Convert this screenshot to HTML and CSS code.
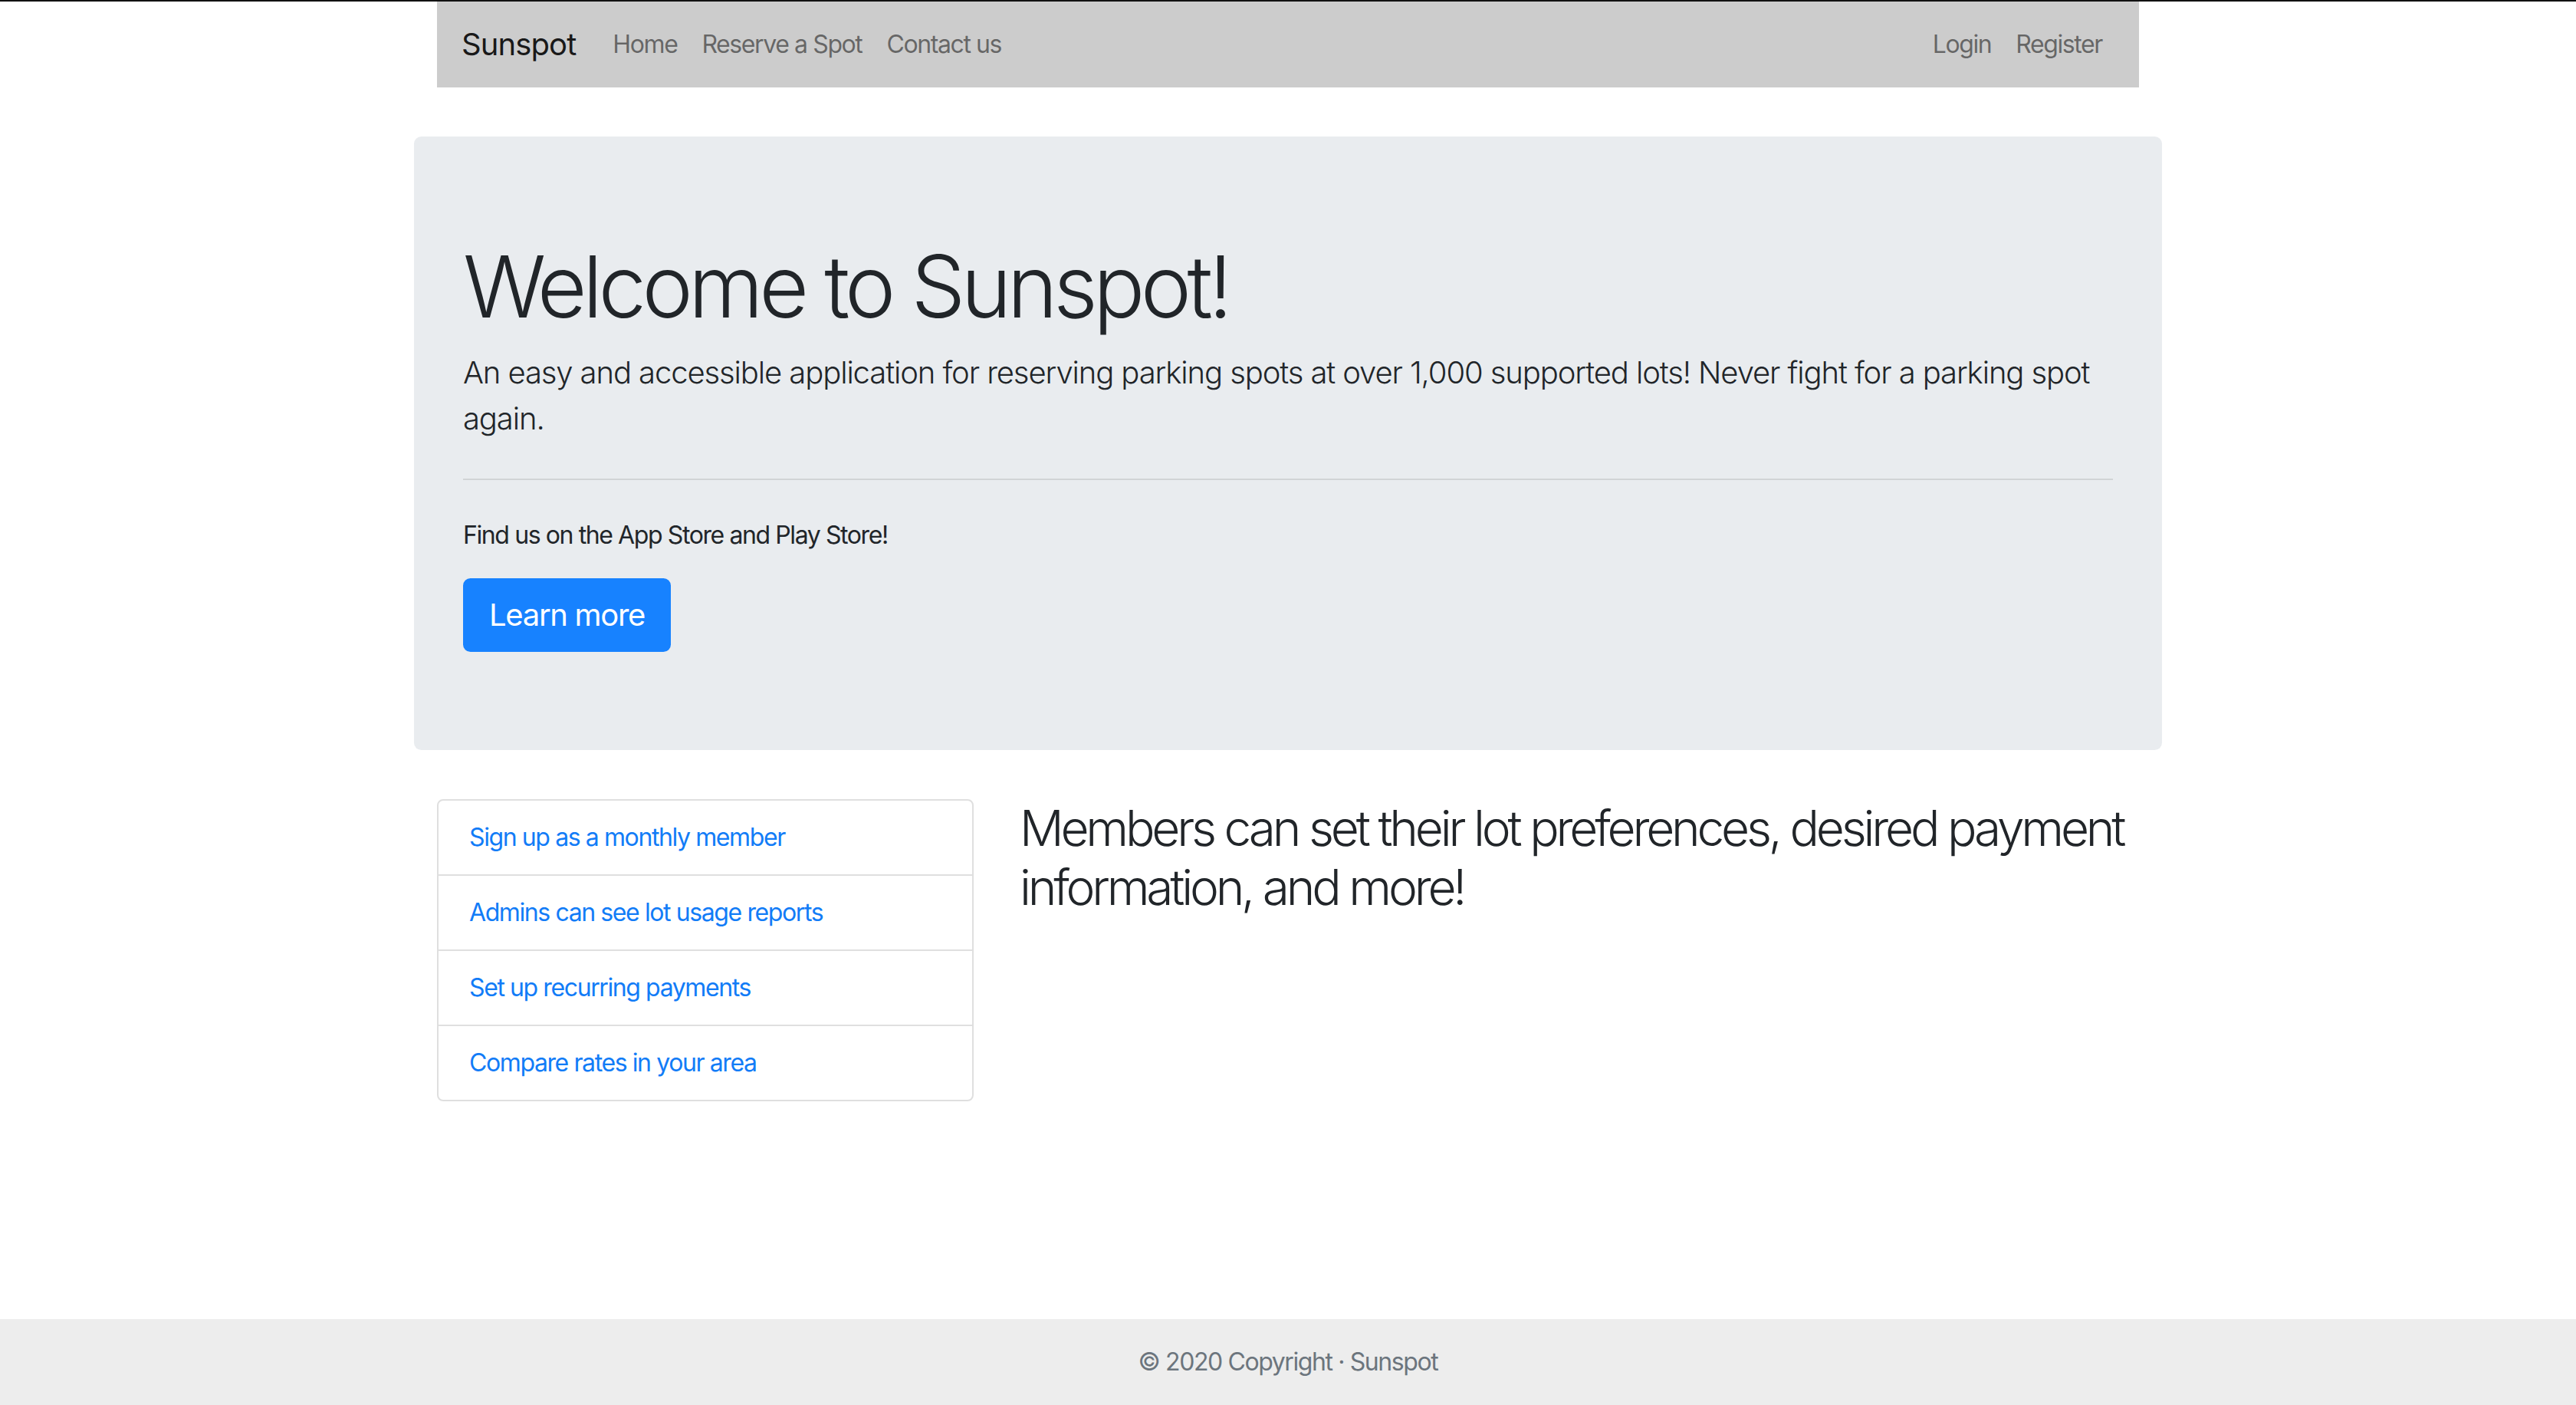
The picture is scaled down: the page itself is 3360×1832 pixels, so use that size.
FILE: index.html
```html
<!DOCTYPE html>
<html lang="en">
<head>
<meta charset="utf-8">
<title>Sunspot</title>
<link rel="stylesheet" href="styles.css">
</head>
<body>
<div class="topline"></div>
<div class="container">
  <nav class="navbar">
    <a class="brand" href="#">Sunspot</a>
    <ul class="nav">
      <li><a class="nav-link" href="#">Home</a></li>
      <li><a class="nav-link" href="#">Reserve a Spot</a></li>
      <li><a class="nav-link" href="#">Contact us</a></li>
    </ul>
    <ul class="nav nav-right">
      <li><a class="nav-link" href="#">Login</a></li>
      <li><a class="nav-link" href="#">Register</a></li>
    </ul>
  </nav>
</div>
<main class="container main">
  <div class="row">
    <section class="jumbotron">
      <h1 class="display">Welcome to Sunspot!</h1>
      <p class="lead">An easy and accessible application for reserving parking spots at over 1,000 supported lots! Never fight for a parking spot again.</p>
      <hr class="divider">
      <p class="find">Find us on the App Store and Play Store!</p>
      <a class="btn" href="#">Learn more</a>
    </section>
  </div>
  <div class="row">
    <div class="col-4">
      <ul class="list-group">
        <li class="list-item"><a href="#">Sign up as a monthly member</a></li>
        <li class="list-item"><a href="#">Admins can see lot usage reports</a></li>
        <li class="list-item"><a href="#">Set up recurring payments</a></li>
        <li class="list-item"><a href="#">Compare rates in your area</a></li>
      </ul>
    </div>
    <div class="col-8">
      <h2 class="members">Members can set their lot preferences, desired payment information, and more!</h2>
    </div>
  </div>
</main>
<footer class="footer">© 2020 Copyright · Sunspot</footer>
</body>
</html>
```
FILE: styles.css
```css
* { box-sizing: border-box; }
html, body { margin: 0; padding: 0; }
body {
  font-family: "Inter", "Roboto", "Liberation Sans", sans-serif;
  font-size: 32px;
  line-height: 1.5;
  letter-spacing: -1.4px;
  color: #212529;
  background: #fff;
  min-height: 100vh;
  display: flex;
  flex-direction: column;
}
a { text-decoration: none; }
.topline { height: 2px; background: #111; flex: none; }
.container {
  width: 2280px;
  margin: 0 auto;
  padding: 0 30px;
}
.navbar {
  display: flex;
  align-items: center;
  background: #cccccc;
  padding: 16px 32px;
}
.brand {
  font-size: 40px;
  line-height: 60px;
  letter-spacing: -0.9px;
  padding: 10px 0;
  margin-right: 32px;
  color: rgba(0,0,0,.9);
}
.nav {
  display: flex;
  list-style: none;
  margin: 0;
  padding: 0;
}
.nav-right { margin-left: auto; }
.nav-link {
  display: block;
  padding: 0 16px;
  color: rgba(0,0,0,.5);
  line-height: 48px;
}
.main { margin-top: 64px; }
.row {
  display: flex;
  margin: 0 -30px;
}
.jumbotron {
  width: 100%;
  background: #e9ecef;
  border-radius: 9.6px;
  padding: 128px 64px;
  margin-bottom: 64px;
}
.display {
  font-size: 112px;
  font-weight: 300;
  line-height: 1.2;
  letter-spacing: -5.7px;
  margin: 0 0 16px;
}
.lead {
  font-size: 40px;
  font-weight: 300;
  line-height: 60px;
  letter-spacing: -1.1px;
  margin: 0 0 32px;
}
.divider {
  border: 0;
  border-top: 2px solid rgba(0,0,0,.1);
  margin: 48px 0;
}
.find { margin: 0 0 32px; }
.btn {
  display: inline-block;
  background: #1782ff;
  color: #fff;
  font-size: 40px;
  line-height: 60px;
  letter-spacing: -1.3px;
  padding: 16px 32px;
  border: 2px solid #1782ff;
  border-radius: 9.6px;
}
.col-4 { width: 760px; padding: 0 30px; flex: none; }
.col-8 { width: 1520px; padding: 0 30px; flex: none; }
.list-group {
  list-style: none;
  margin: 0;
  padding: 0;
  border: 2px solid rgba(0,0,0,.125);
  border-radius: 8px;
}
.list-item {
  padding: 24px 40px;
  line-height: 48px;
  border-top: 2px solid rgba(0,0,0,.125);
}
.list-item:first-child { border-top: 0; }
.list-item a { color: #127cf7; }
.members {
  font-size: 64px;
  font-weight: 300;
  line-height: 1.2;
  letter-spacing: -4.2px;
  margin: 0;
}
.footer {
  margin-top: auto;
  background: #ededed;
  color: #6c757d;
  text-align: center;
  padding: 32px 0;
  line-height: 48px;
}
```
